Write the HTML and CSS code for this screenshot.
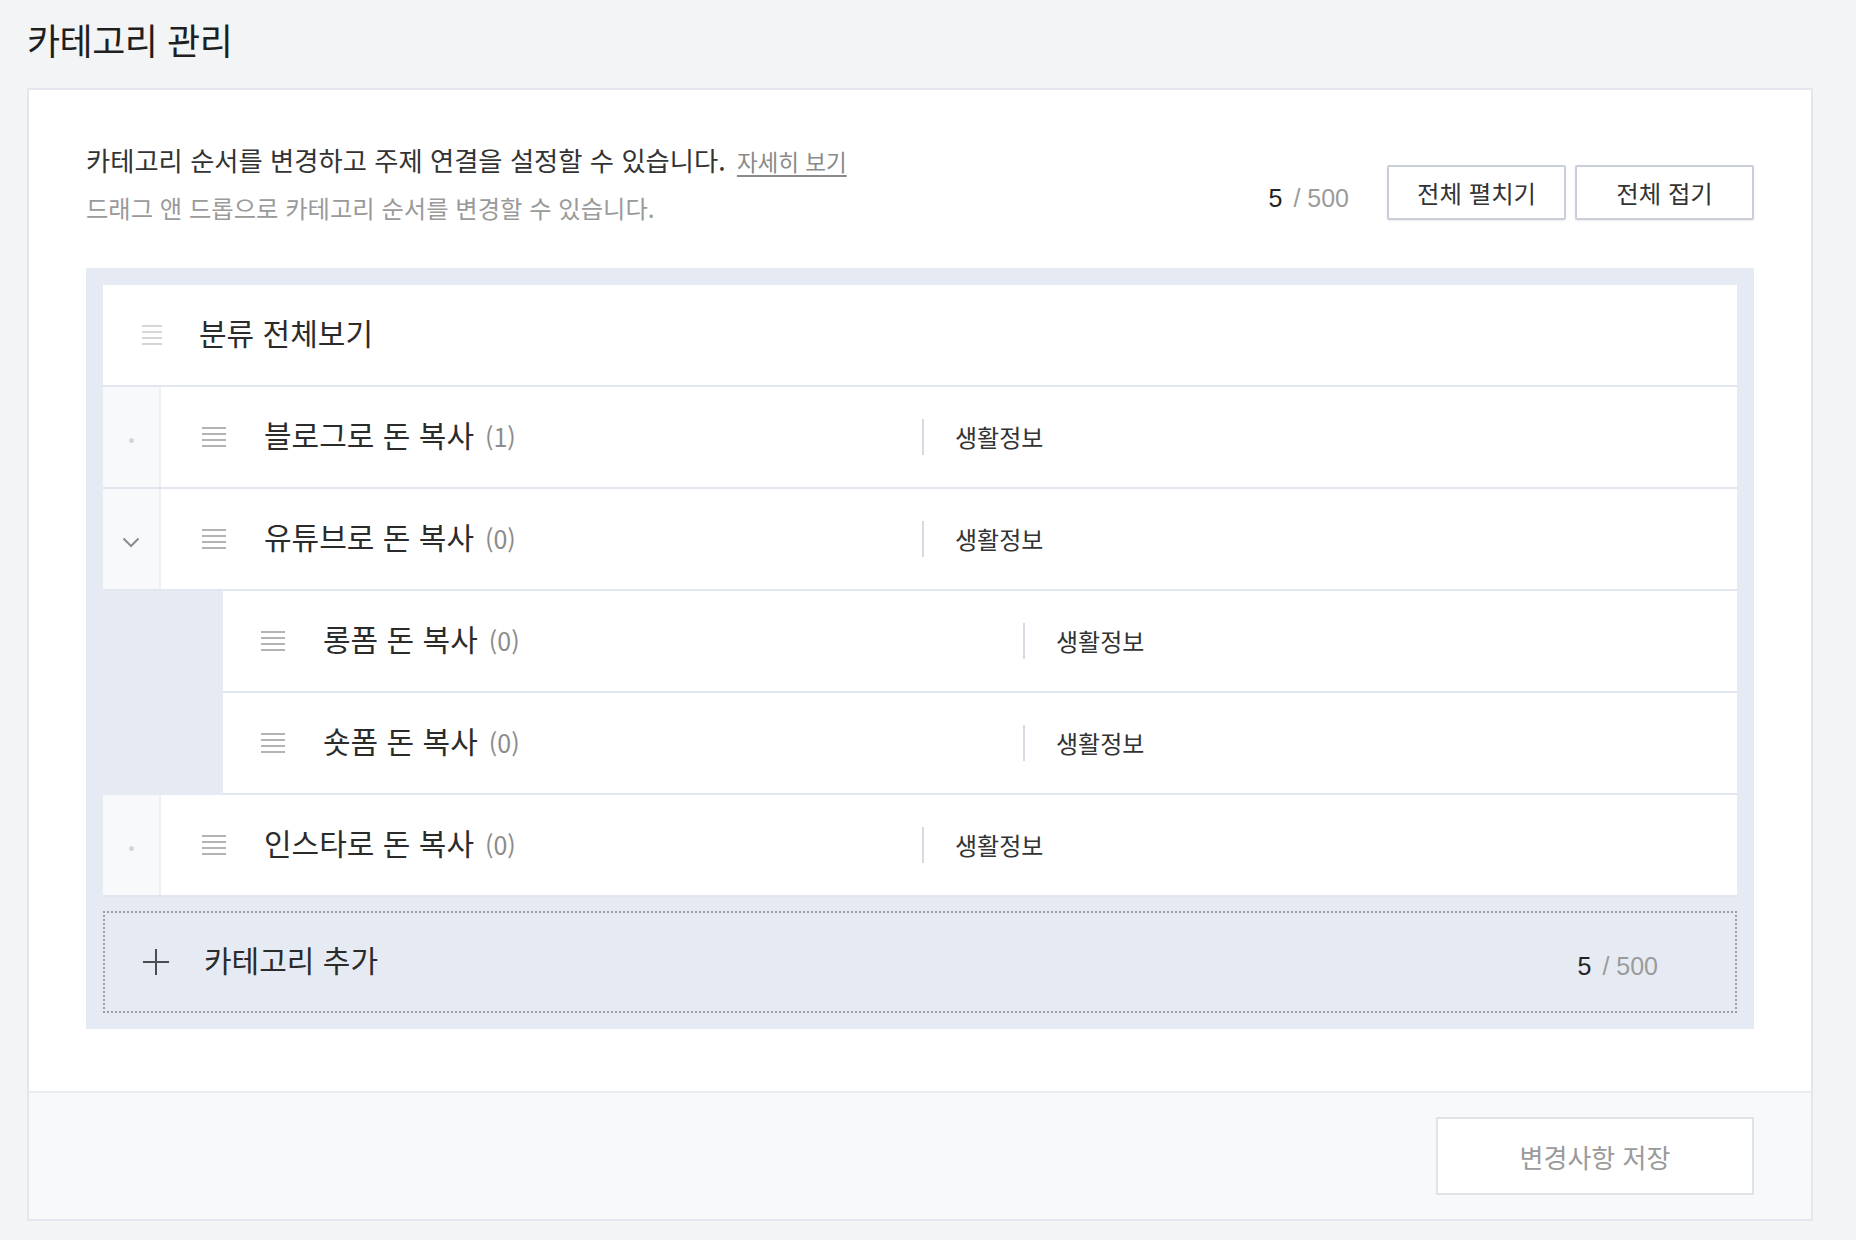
FILE: index.html
```html
<!DOCTYPE html>
<html lang="ko">
<head>
    <meta charset="UTF-8">
    <meta name="viewport" content="width=device-width, initial-scale=1.0">
    <title>카테고리 관리</title>
    <link rel="stylesheet" href="styles.css">
</head>
<body>
    <div class="page">
        <h1 class="page-title">카테고리 관리</h1>

        <div class="card">
            <div class="card-body">
                <div class="header">
                    <div class="desc">
                        <p class="desc-main">카테고리 순서를 변경하고 주제 연결을 설정할 수 있습니다. <a href="#" class="more">자세히 보기</a></p>
                        <p class="desc-sub">드래그 앤 드롭으로 카테고리 순서를 변경할 수 있습니다.</p>
                    </div>
                    <div class="actions">
                        <span class="counter"><b>5</b> / 500</span>
                        <button class="btn">전체 펼치기</button>
                        <button class="btn">전체 접기</button>
                    </div>
                </div>

                <div class="tree">
                    <div class="row row-root">
                        <span class="handle light"><i></i><i></i><i></i><i></i></span>
                        <span class="name">분류 전체보기</span>
                    </div>

                    <div class="row">
                        <span class="toggle"><span class="dot"></span></span>
                        <span class="handle"><i></i><i></i><i></i><i></i></span>
                        <span class="name-col">
                            <span class="name">블로그로 돈 복사</span><span class="count">(1)</span>
                        </span>
                        <span class="topic">생활정보</span>
                    </div>

                    <div class="row">
                        <span class="toggle">
                            <svg width="18" height="11" viewBox="0 0 18 11"><path d="M1.5 1.5 L9 9 L16.5 1.5" fill="none" stroke="#8a8d93" stroke-width="2"/></svg>
                        </span>
                        <span class="handle"><i></i><i></i><i></i><i></i></span>
                        <span class="name-col">
                            <span class="name">유튜브로 돈 복사</span><span class="count">(0)</span>
                        </span>
                        <span class="topic">생활정보</span>
                    </div>

                    <div class="children">
                        <div class="row row-child">
                            <span class="handle"><i></i><i></i><i></i><i></i></span>
                            <span class="name-col">
                                <span class="name">롱폼 돈 복사</span><span class="count">(0)</span>
                            </span>
                            <span class="topic">생활정보</span>
                        </div>
                        <div class="row row-child">
                            <span class="handle"><i></i><i></i><i></i><i></i></span>
                            <span class="name-col">
                                <span class="name">숏폼 돈 복사</span><span class="count">(0)</span>
                            </span>
                            <span class="topic">생활정보</span>
                        </div>
                    </div>

                    <div class="row">
                        <span class="toggle"><span class="dot"></span></span>
                        <span class="handle"><i></i><i></i><i></i><i></i></span>
                        <span class="name-col">
                            <span class="name">인스타로 돈 복사</span><span class="count">(0)</span>
                        </span>
                        <span class="topic">생활정보</span>
                    </div>

                    <div class="add-row">
                        <svg class="plus" width="26" height="26" viewBox="0 0 26 26"><path d="M13 0 V26 M0 13 H26" stroke="#4a4d52" stroke-width="2"/></svg>
                        <span class="add-label">카테고리 추가</span>
                        <span class="counter"><b>5</b> / 500</span>
                    </div>
                </div>
            </div>

            <div class="card-footer">
                <button class="btn-save">변경사항 저장</button>
            </div>
        </div>
    </div>
</body>
</html>
```

FILE: styles.css
```css
body {
    margin: 0;
    background-color: #f3f4f6;
    font-family: "Noto Sans CJK KR", "Noto Sans", sans-serif;
    color: #333333;
}

.page {
    padding: 0 43px 18px 27px;
}

.page-title {
    margin: 0;
    padding: 16px 0 0 0;
    font-size: 36px;
    font-weight: 400;
    line-height: 46px;
    color: #1f1f1f;
    letter-spacing: -0.5px;
}

.card {
    margin-top: 26px;
    background-color: #ffffff;
    border: 2px solid #e3e6ec;
}

.card-body {
    padding: 52px 57px 62px 57px;
}

/* header */
.header {
    display: flex;
    justify-content: space-between;
    align-items: flex-end;
}

.desc p {
    margin: 0;
    line-height: 36px;
}

.desc-main {
    font-size: 26.3px;
    color: #333333;
}

.desc-main .more {
    margin-left: 4px;
    font-size: 22.5px;
    color: #8a8a8a;
    text-decoration: underline;
    text-underline-offset: 4px;
}

.desc-sub {
    margin-top: 11px !important;
    font-size: 24.3px;
    color: #9a9a9a;
}

.actions {
    display: flex;
    align-items: center;
    gap: 9px;
    margin-bottom: 6px;
}

.counter {
    font-family: "Liberation Sans", Arial, sans-serif;
    font-size: 25px;
    color: #9b9b9b;
    margin-right: 29px;
    margin-top: 11px;
}

.counter b {
    font-weight: 400;
    color: #222222;
    margin-right: 4px;
}

.btn {
    width: 179px;
    height: 55px;
    background: #ffffff;
    border: 2px solid #c9ced8;
    border-radius: 2px;
    box-shadow: 0 1px 2px rgba(0, 0, 0, 0.08);
    font-family: inherit;
    font-size: 24.4px;
    color: #333333;
    cursor: pointer;
}

/* tree */
.tree {
    margin-top: 42px;
    background-color: #e6eaf2;
    padding: 17px 17px 16px 17px;
}

.row {
    display: flex;
    align-items: center;
    height: 100px;
    background: #ffffff;
    border-bottom: 2px solid #e2e6ee;
}

.toggle {
    width: 56px;
    align-self: stretch;
    display: flex;
    align-items: center;
    justify-content: center;
    background: #f8f9fb;
    border-right: 2px solid #edf0f4;
}

.toggle svg {
    margin-top: 6px;
}

.dot {
    width: 5px;
    height: 5px;
    border-radius: 50%;
    background: #d3d6db;
    margin-top: 6px;
}

.handle {
    display: flex;
    flex-direction: column;
    gap: 4px;
    width: 24px;
    margin-left: 41px;
    margin-right: 38px;
}

.handle i {
    display: block;
    height: 2px;
    background: #b4b4b4;
}

.handle.light {
    width: 20px;
    margin-left: 39px;
    margin-right: 37px;
}

.handle.light i {
    background: #d6d6d6;
}

.name {
    font-size: 30px;
    color: #2b2b2b;
}

.row-root .name {
    padding-bottom: 6px;
}

.name-col {
    width: 658px;
    display: flex;
    align-items: baseline;
    gap: 11px;
    padding-bottom: 6px;
}

.count {
    font-size: 25px;
    color: #8c8c8c;
}

.topic {
    border-left: 2px solid #d6dbe3;
    height: 36px;
    line-height: 36px;
    padding-left: 31px;
    font-size: 24px;
    color: #333333;
}

.children {
    padding-left: 120px;
}

.row-child .handle {
    margin-left: 38px;
}

.row-child .name-col {
    width: 700px;
}

/* add row */
.add-row {
    display: flex;
    align-items: center;
    height: 98px;
    margin-top: 14px;
    border: 2px dotted #9a9ea6;
    background-color: #e6eaf2;
}

.add-row .plus {
    margin-left: 38px;
    margin-right: 35px;
}

.add-label {
    font-size: 30px;
    color: #2b2b2b;
    padding-bottom: 6px;
}

.add-row .counter {
    margin-left: auto;
    margin-right: 77px;
    margin-top: 8px;
}

/* footer */
.card-footer {
    display: flex;
    justify-content: flex-end;
    padding: 24px 57px 24px;
    background-color: #f8f9fb;
    border-top: 2px solid #eceef2;
}

.btn-save {
    width: 318px;
    height: 78px;
    background: #ffffff;
    border: 2px solid #dfe3ea;
    font-family: inherit;
    font-size: 26px;
    color: #9a9a9a;
}
```
